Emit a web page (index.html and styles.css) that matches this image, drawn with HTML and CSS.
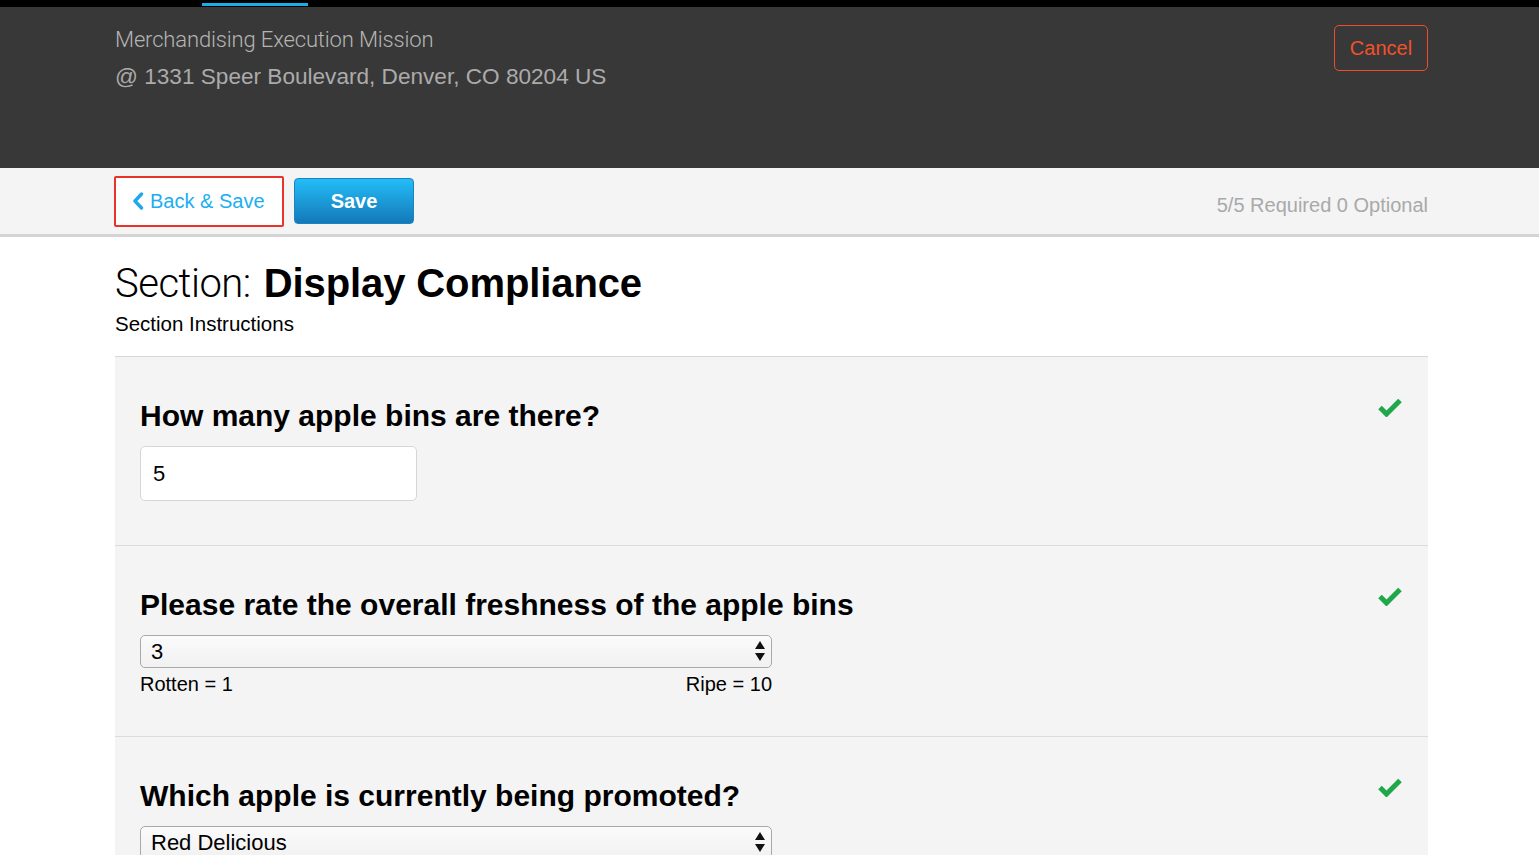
FILE: index.html
```html
<!DOCTYPE html>
<html lang="en">
<head>
    <meta charset="UTF-8">
    <meta name="viewport" content="width=device-width, initial-scale=1.0">
    <title>Merchandising Execution Mission</title>
    <link rel="stylesheet" href="styles.css">
</head>
<body>
    <div class="topbar">
        <span class="topbar-tab"></span>
    </div>

    <header class="mission-header">
        <div class="wrap header-row">
            <div class="mission-info">
                <div class="mission-name">Merchandising Execution Mission</div>
                <div class="mission-address">@ 1331 Speer Boulevard, Denver, CO 80204 US</div>
            </div>
            <button class="btn-cancel">Cancel</button>
        </div>
    </header>

    <div class="toolbar">
        <div class="wrap toolbar-row">
            <div class="toolbar-buttons">
                <button class="btn-back">
                    <svg class="chevron" width="12" height="18" viewBox="0 0 12 18">
                        <path d="M9.5 2 L3 9 L9.5 16" fill="none" stroke="#1fa8ea" stroke-width="3.4" stroke-linecap="round" stroke-linejoin="round"/>
                    </svg>
                    Back &amp; Save
                </button>
                <button class="btn-save">Save</button>
            </div>
            <div class="progress">5/5 Required 0 Optional</div>
        </div>
    </div>

    <main class="wrap">
        <h1 class="section-title"><span class="light">Section:</span> Display Compliance</h1>
        <p class="section-instructions">Section Instructions</p>

        <div class="questions">
            <div class="question">
                <div class="question-body">
                    <h2>How many apple bins are there?</h2>
                    <input class="text-input" type="text" value="5">
                </div>
                <svg class="check" width="26" height="20" viewBox="0 0 26 20">
                    <path d="M3 10.5 L9.5 17 L23 3.5" fill="none" stroke="#1ea84a" stroke-width="5"/>
                </svg>
            </div>

            <div class="question">
                <div class="question-body">
                    <h2>Please rate the overall freshness of the apple bins</h2>
                    <div class="select-wrap">
                        <select class="select">
                            <option>3</option>
                        </select>
                        <svg class="select-arrows" width="12" height="22" viewBox="0 0 12 22">
                            <path d="M6 1 L11 9 L1 9 Z M6 21 L11 13 L1 13 Z" fill="#111"/>
                        </svg>
                    </div>
                    <div class="scale-labels">
                        <span>Rotten = 1</span>
                        <span>Ripe = 10</span>
                    </div>
                </div>
                <svg class="check" width="26" height="20" viewBox="0 0 26 20">
                    <path d="M3 10.5 L9.5 17 L23 3.5" fill="none" stroke="#1ea84a" stroke-width="5"/>
                </svg>
            </div>

            <div class="question">
                <div class="question-body">
                    <h2>Which apple is currently being promoted?</h2>
                    <div class="select-wrap">
                        <select class="select">
                            <option>Red Delicious</option>
                        </select>
                        <svg class="select-arrows" width="12" height="22" viewBox="0 0 12 22">
                            <path d="M6 1 L11 9 L1 9 Z M6 21 L11 13 L1 13 Z" fill="#111"/>
                        </svg>
                    </div>
                </div>
                <svg class="check" width="26" height="20" viewBox="0 0 26 20">
                    <path d="M3 10.5 L9.5 17 L23 3.5" fill="none" stroke="#1ea84a" stroke-width="5"/>
                </svg>
            </div>
        </div>
    </main>
</body>
</html>
```

FILE: styles.css
```css
body {
    margin: 0;
    font-family: "Liberation Sans", Arial, sans-serif;
    color: #000;
    background-color: #fff;
}
.wrap {
    width: 1313px;
    margin-left: 115px;
}
.topbar {
    height: 7px;
    background-color: #000;
}
.topbar-tab {
    display: block;
    margin-left: 202px;
    width: 106px;
    height: 3px;
    position: relative;
    top: 3px;
    background-color: #19aee6;
}
.mission-header {
    background-color: #383838;
    height: 161px;
}
.header-row {
    display: flex;
    justify-content: space-between;
    align-items: flex-start;
}
.mission-name {
    font-family: Roboto, "Liberation Sans", sans-serif;
    font-weight: 300;
    font-size: 22px;
    letter-spacing: -0.15px;
    color: #b4b4b4;
    margin-top: 20px;
    line-height: 26px;
}
.mission-address {
    font-size: 22.6px;
    color: #ababab;
    margin-top: 11px;
    line-height: 26px;
}
.btn-cancel {
    margin-top: 18px;
    width: 94px;
    height: 46px;
    border: 1px solid #e8502a;
    border-radius: 5px;
    background: transparent;
    color: #f0522a;
    font-family: "Liberation Sans", Arial, sans-serif;
    font-size: 20px;
    padding: 0;
}
.toolbar {
    background-color: #f4f4f4;
    border-bottom: 3px solid #d4d4d4;
    height: 66px;
}
.toolbar-row {
    display: flex;
    justify-content: space-between;
    align-items: center;
    height: 66px;
}
.toolbar-buttons {
    display: flex;
    align-items: center;
    gap: 10px;
    margin-left: -1px;
}
.btn-back {
    display: flex;
    align-items: center;
    gap: 6px;
    width: 170px;
    height: 51px;
    background-color: #fff;
    border: 2px solid #e8322b;
    border-radius: 2px;
    color: #20aef0;
    font-family: "Liberation Sans", Arial, sans-serif;
    font-size: 20px;
    padding: 0 0 0 16px;
}
.btn-save {
    width: 120px;
    height: 46px;
    border: 1px solid #1884c6;
    border-radius: 4px;
    background: linear-gradient(#23bdf8, #1479b8);
    color: #fff;
    font-family: "Liberation Sans", Arial, sans-serif;
    font-weight: bold;
    font-size: 20px;
    padding: 0;
}
.progress {
    font-size: 20px;
    color: #a9a9a9;
    margin-top: 8px;
}
.section-title {
    margin: 22px 0 0;
    font-size: 40px;
    font-weight: bold;
    line-height: 48px;
    letter-spacing: -0.1px;
}
.section-title .light {
    font-family: Roboto, "Liberation Sans", sans-serif;
    font-weight: 300;
    letter-spacing: -0.5px;
    margin-right: 2px;
}
.section-instructions {
    margin: 4px 0 0;
    font-size: 20.5px;
    line-height: 24px;
}
.questions {
    margin-top: 20px;
    border-top: 1px solid #d8d8d8;
}
.question {
    display: flex;
    justify-content: space-between;
    align-items: flex-start;
    background-color: #f4f4f4;
    border-bottom: 1px solid #dcdcdc;
    padding: 42px 25px 44px 25px;
}
.question h2 {
    margin: 0 0 13px;
    font-size: 30px;
    line-height: 34px;
}
.check {
    margin-top: -2px;
}
.text-input {
    box-sizing: border-box;
    width: 277px;
    height: 55px;
    border: 1px solid #d6d6d6;
    border-radius: 5px;
    background-color: #fff;
    padding: 0 12px;
    font-family: "Liberation Sans", Arial, sans-serif;
    font-size: 22px;
    color: #000;
}
.select-wrap {
    position: relative;
    width: 632px;
}
.select {
    appearance: none;
    -webkit-appearance: none;
    box-sizing: border-box;
    width: 632px;
    height: 33px;
    border: 1px solid #a9a9a9;
    border-radius: 5px;
    background: linear-gradient(#fbfbfb, #f1f1f1);
    padding: 0 10px;
    font-family: "Liberation Sans", Arial, sans-serif;
    font-size: 22px;
    color: #000;
}
.select-arrows {
    position: absolute;
    right: 6px;
    top: 5px;
}
.scale-labels {
    display: flex;
    justify-content: space-between;
    width: 632px;
    margin: 6px 0 -2px;
    font-size: 20px;
    line-height: 20px;
}
```
